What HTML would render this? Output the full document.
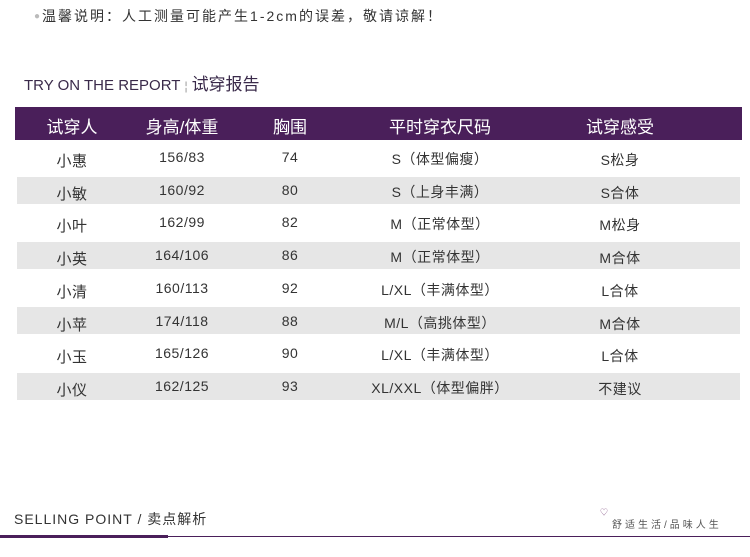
<!DOCTYPE html>
<html><head><meta charset="utf-8"><style>
body{margin:0;width:750px;height:557px;background:#fff;position:relative;overflow:hidden;font-family:"Liberation Sans","Noto Sans CJK SC",sans-serif;color:#333}
.a{position:absolute;white-space:nowrap}
.hdr{position:absolute;left:15px;top:107px;width:727px;height:33px;background:#4a1f5a}
.g{position:absolute;left:17px;width:723px;height:27px;background:#e6e6e6}
.c{position:absolute;transform:translateX(-50%);white-space:nowrap;font-size:14px;letter-spacing:0.5px}
.h{color:#fff;font-size:17px;letter-spacing:0}
</style></head><body>
<div class="a" style="left:34px;top:6px;font-size:14px;color:#333;letter-spacing:2px"><span style="color:#bbb;font-size:10px;vertical-align:2px">●</span>温馨说明：人工测量可能产生1-2cm的误差，敬请谅解！</div>
<div class="a" style="left:24px;top:70px;font-size:15px;color:#3a2a4a">TRY ON THE REPORT<span style="color:#999;margin:0 4px;font-size:12px">¦</span><span style="font-size:17px">试穿报告</span></div>
<div class="hdr"></div>
<div class="g" style="top:177px"></div>
<div class="g" style="top:242px"></div>
<div class="g" style="top:307px"></div>
<div class="g" style="top:373px"></div>
<div id="t"></div>
<div class="a" style="left:14px;top:509px;font-size:14px;letter-spacing:1px;color:#333">SELLING POINT / 卖点解析</div>
<div class="a" style="left:600px;top:507px;font-size:8px;color:#8a5a8a">♡</div>
<div class="a" style="left:612px;top:516px;font-size:10px;letter-spacing:3px;color:#555">舒适生活/品味人生</div>
<div class="a" style="left:0;top:535px;width:168px;height:3px;background:#4a1f5a"></div>
<div class="a" style="left:168px;top:536px;width:582px;height:1px;background:#4a1f5a"></div>
<script>
var X=[72,182,290,440,620];
var H=["试穿人","身高/体重","胸围","平时穿衣尺码","试穿感受"];
var R=[["小惠","156/83","74","S（体型偏瘦）","S松身"],["小敏","160/92","80","S（上身丰满）","S合体"],["小叶","162/99","82","M（正常体型）","M松身"],["小英","164/106","86","M（正常体型）","M合体"],["小清","160/113","92","L/XL（丰满体型）","L合体"],["小苹","174/118","88","M/L（高挑体型）","M合体"],["小玉","165/126","90","L/XL（丰满体型）","L合体"],["小仪","162/125","93","XL/XXL（体型偏胖）","不建议"]];
var s="";
H.forEach(function(h,i){s+='<div class="c h" style="left:'+X[i]+'px;top:113px">'+h+'</div>'});
R.forEach(function(r,j){var y=144+32.7*j+5;r.forEach(function(v,i){var yy=y+(i==4?1:0)+(i==0?1:0);s+='<div class="c" style="left:'+X[i]+'px;top:'+yy+'px;'+(i==0?'font-size:15px':'')+'">'+v+'</div>'})});
document.getElementById("t").innerHTML=s;
</script>
</body></html>
